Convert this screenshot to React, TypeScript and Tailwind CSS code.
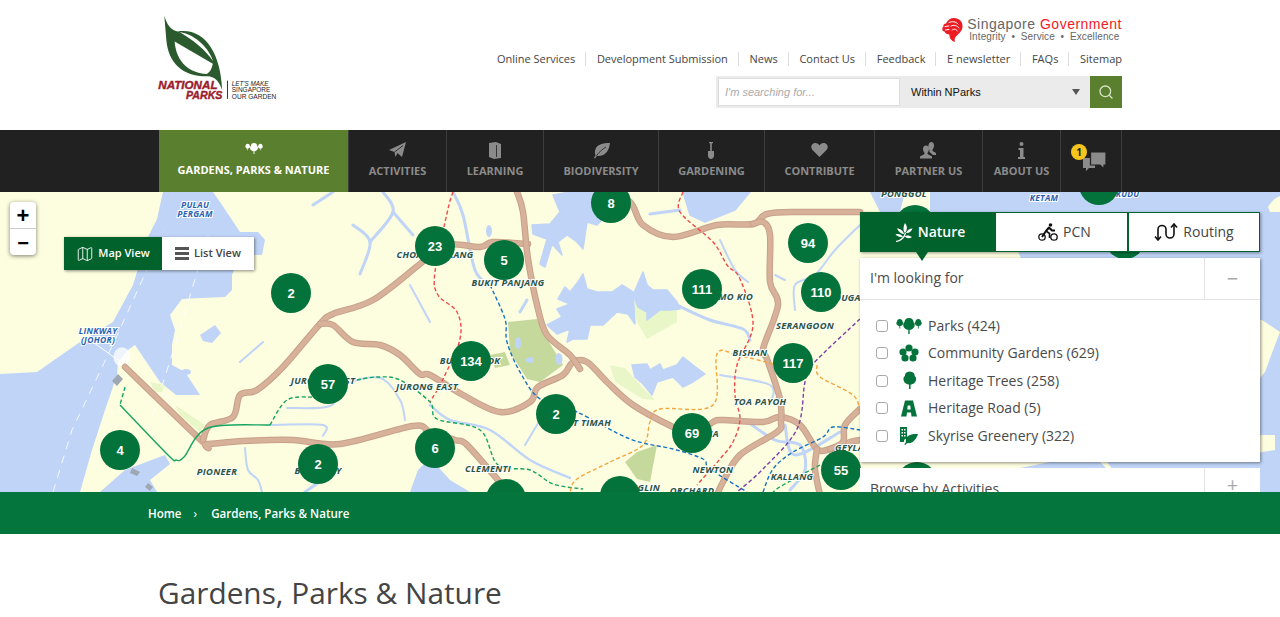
import { Map as MapIcon, Search } from "lucide-react";

type Pt = [number, number];

// catmull-rom through page coordinates, so roads don't look like polylines
function smooth(points: Pt[]) {
  let d = `M${points[0][0]} ${points[0][1]}`;
  for (let i = 0; i < points.length - 1; i++) {
    const p0 = points[i - 1] || points[i];
    const p1 = points[i];
    const p2 = points[i + 1];
    const p3 = points[i + 2] || p2;
    const c1x = p1[0] + (p2[0] - p0[0]) / 6;
    const c1y = p1[1] + (p2[1] - p0[1]) / 6;
    const c2x = p2[0] - (p3[0] - p1[0]) / 6;
    const c2y = p2[1] - (p3[1] - p1[1]) / 6;
    d += ` C${c1x.toFixed(1)} ${c1y.toFixed(1)} ${c2x.toFixed(1)} ${c2y.toFixed(1)} ${p2[0]} ${p2[1]}`;
  }
  return d;
}

const roads: Pt[][] = [
  [[125, 367], [203, 442], [207, 444], [243, 441], [293, 440], [340, 444], [413, 426], [430, 432], [455, 440], [467, 445], [497, 479], [510, 495]],
  [[203, 440], [210, 425], [233, 417], [240, 395], [257, 390], [283, 367], [320, 324], [333, 314], [373, 300], [420, 264], [445, 245], [480, 247], [493, 242], [528, 244]],
  [[320, 324], [333, 325], [353, 342], [380, 345], [400, 355], [420, 374], [430, 375], [463, 395], [500, 412], [530, 402], [538, 387], [563, 375], [573, 362], [587, 362], [607, 382], [633, 405], [673, 427], [695, 435], [713, 422], [723, 420], [763, 422], [780, 417], [800, 425], [817, 449], [830, 449], [850, 442], [860, 440]],
  [[517, 192], [523, 212], [528, 259], [538, 309], [547, 335], [570, 355], [580, 369]],
  [[605, 192], [630, 202], [643, 225], [673, 237], [717, 225], [753, 224], [767, 214], [800, 212], [860, 212]],
  [[753, 224], [763, 222], [770, 235], [770, 282], [778, 305], [763, 349], [767, 359], [780, 399], [781, 422], [777, 432], [740, 455], [723, 482], [717, 495]],
  [[817, 449], [815, 469], [820, 495]],
  [[830, 449], [843, 442], [845, 425], [860, 409]],
];

const metro: { color: string; pts: Pt[]; dash?: string }[] = [
  { color: "#ee4b4b", pts: [[453, 192], [448, 209], [435, 272], [438, 295], [457, 312], [460, 339], [443, 379], [430, 402]] },
  { color: "#ee4b4b", pts: [[683, 192], [680, 212], [713, 242], [727, 265], [740, 279], [753, 325], [737, 365], [735, 395], [740, 419], [733, 442], [720, 459], [697, 485]] },
  { color: "#16a560", pts: [[125, 387], [120, 405]] },
  { color: "#16a560", pts: [[120, 405], [168, 455], [176, 460], [184, 457], [208, 428], [270, 425]], dash: "none" },
  { color: "#16a560", pts: [[270, 425], [287, 400], [313, 397]] },
  { color: "#16a560", pts: [[357, 380], [377, 377], [400, 380], [430, 402], [437, 419], [480, 430], [498, 465], [530, 470], [553, 484], [583, 489]] },
  { color: "#1673c5", pts: [[490, 285], [505, 319], [507, 342], [520, 372], [540, 399], [577, 412], [630, 439], [673, 449], [703, 459], [710, 469], [747, 492]] },
  { color: "#1673c5", pts: [[763, 492], [773, 469], [793, 452], [823, 437], [833, 427], [860, 430]] },
  { color: "#f4a53c", pts: [[773, 364], [737, 355], [717, 354], [713, 405], [660, 409], [650, 422], [643, 445], [610, 462], [577, 479], [570, 492]] },
  { color: "#f4a53c", pts: [[817, 365], [820, 377], [853, 395], [860, 412]] },
  { color: "#7b3fa8", pts: [[860, 319], [813, 364], [805, 382], [797, 429], [763, 469], [737, 492]] },
  { color: "#16a560", pts: [[820, 465], [783, 485], [773, 492]] },
];

// the reservoirs have jagged edges, so they are plain polygons
const reservoirs = [
  "532,225 550,224 560,212 553,195 570,192 593,192 607,215 597,225 587,222 583,249 577,242 567,235 558,242 562,255 552,244 545,267 540,264 547,239 533,234",
  "558,299 565,287 570,292 578,282 583,274 587,289 597,292 612,292 622,285 633,292 635,324 628,314 617,312 603,325 590,325 587,339 573,339 567,342 570,329 557,334 547,325 562,317 557,309 570,304",
  "633,295 643,272 647,285 653,290 667,290 677,302 680,309 670,310 660,310 647,320 647,312 638,307",
  "632,365 647,364 650,370 660,364 663,370 677,365 683,357 693,365 705,374 693,382 683,387 673,377 657,382 652,395 643,384 635,377",
  "683,192 750,192 735,210 705,222 690,215",
];

const rivers: { w: number; pts: Pt[] }[] = [
  { w: 3, pts: [[677, 305], [710, 320], [743, 329], [750, 340]] },
  { w: 3, pts: [[650, 214], [680, 210]] },
  { w: 3, pts: [[453, 192], [463, 215], [475, 270], [490, 285]] },
  { w: 3, pts: [[353, 225], [370, 242], [360, 274]] },
  { w: 3, pts: [[370, 242], [393, 212], [383, 192]] },
  { w: 3, pts: [[393, 212], [413, 235]] },
  { w: 3, pts: [[313, 205], [333, 192]] },
  { w: 2, pts: [[410, 285], [430, 322]] },
  { w: 2, pts: [[240, 362], [263, 342]] },
  { w: 2, pts: [[287, 408], [330, 406], [345, 385], [380, 378], [400, 400], [405, 420]] },
  { w: 2, pts: [[270, 425], [323, 425], [323, 436]] },
  { w: 2, pts: [[245, 448], [248, 470], [258, 480], [262, 492]] },
  { w: 3, pts: [[322, 480], [305, 492]] },
  { w: 2.5, pts: [[430, 405], [450, 420], [490, 430], [530, 460], [570, 478]] },
  { w: 2, pts: [[540, 420], [525, 445]] },
  { w: 3, pts: [[520, 312], [527, 300]] },
  { w: 2, pts: [[720, 375], [770, 385], [770, 405]] },
  { w: 3, pts: [[745, 420], [775, 440], [800, 445], [805, 470], [790, 490]] },
  { w: 3, pts: [[785, 425], [795, 455], [840, 432]] },
  { w: 2, pts: [[720, 240], [735, 270], [748, 282]] },
  { w: 2, pts: [[775, 275], [785, 280]] },
  { w: 2, pts: [[795, 310], [795, 285], [815, 275], [835, 250], [860, 225]] },
];

const clusters: { x: number; y: number; n?: string }[] = [
  { x: 611, y: 203, n: "8" },
  { x: 435, y: 246, n: "23" },
  { x: 504, y: 260, n: "5" },
  { x: 291, y: 293, n: "2" },
  { x: 328, y: 384, n: "57" },
  { x: 471, y: 361, n: "134" },
  { x: 556, y: 414, n: "2" },
  { x: 120, y: 450, n: "4" },
  { x: 318, y: 464, n: "2" },
  { x: 435, y: 448, n: "6" },
  { x: 692, y: 433, n: "69" },
  { x: 841, y: 470, n: "55" },
  { x: 702, y: 289, n: "111" },
  { x: 821, y: 292, n: "110" },
  { x: 808, y: 243, n: "94" },
  { x: 793, y: 363, n: "117" },
  { x: 506, y: 499 },
  { x: 620, y: 496 },
  { x: 915, y: 225 },
  { x: 1099, y: 185 },
  { x: 1125, y: 239 },
  { x: 917, y: 482 },
];

const labels: { x: number; y: number; t: string; a?: "start" | "middle" | "end" }[] = [
  { x: 435, y: 258, t: "CHOA CHU KANG" },
  { x: 508, y: 286, t: "BUKIT PANJANG" },
  { x: 753, y: 300, t: "ANG MO KIO", a: "end" },
  { x: 805, y: 329, t: "SERANGOON" },
  { x: 851, y: 301, t: "HOUGANG" },
  { x: 750, y: 356, t: "BISHAN" },
  { x: 760, y: 405, t: "TOA PAYOH" },
  { x: 470, y: 364, t: "BUKIT BATOK" },
  { x: 427, y: 390, t: "JURONG EAST" },
  { x: 323, y: 384, t: "JURONG WEST" },
  { x: 217, y: 475, t: "PIONEER" },
  { x: 318, y: 474, t: "BOON LAY" },
  { x: 611, y: 426, t: "BUKIT TIMAH", a: "end" },
  { x: 719, y: 437, t: "NOVENA", a: "end" },
  { x: 713, y: 473, t: "NEWTON" },
  { x: 692, y: 494, t: "ORCHARD" },
  { x: 792, y: 480, t: "KALLANG" },
  { x: 835, y: 451, t: "GEYLANG", a: "start" },
  { x: 488, y: 472, t: "CLEMENTI" },
  { x: 660, y: 491, t: "TANGLIN", a: "end" },
  { x: 904, y: 197, t: "PONGGOL" },
];

function MapCanvas() {
  return (
    <svg viewBox="0 192 1280 300" className="block h-[300px] w-[1280px]">
      <rect x="0" y="192" width="1280" height="300" fill="#fdfde0" />
      {/* strait and north-east coast */}
      <path
        fill="#bfd4f7"
        d="M163 192L157 219 147 239 133 285 113 322 80 342 37 372 0 374 0 492 80 492 92 450 105 410 117 375 118 362 128 350 135 345 160 382 176 395 200 395 185 372 172 365 172 345 175 330 170 315 182 299 200 298 225 297 232 290 232 275 240 255 262 255 265 240 258 232 240 232 222 205 213 192Z"
      />
      <path fill="#bfd4f7" d="M930 192H1280V492H1130L1090 440 1040 300 1000 212 930 212Z" />
      <path fill="#bfd4f7" d="M870 192H905L900 212H880Z" />
      <path fill="#fdfde0" d="M1262 320L1280 332 1275 345 1265 372 1260 378 1220 378 1220 320Z" />
      <path fill="#fdfde0" d="M1200 435H1275V450L1200 462Z" />
      <path fill="#fdfde0" d="M1268 207C1272 200 1276 198 1280 196V212H1270Z" />
      <path fill="#fdfde0" d="M860 462H1100V470L1010 492H860Z" />
      <path fill="#bfd4f7" d="M1010 470L1050 462 1100 462 1130 492 1000 492Z" />
      {/* port and bay shapes */}
      <path fill="#bfd4f7" d="M125 470L165 455 170 464 150 480 157 492 100 492Z" />
      <path fill="#bfd4f7" d="M410 492L418 470 430 458 450 480 470 492Z" />
      <path fill="#bfd4f7" d="M200 335L215 325 221 333 212 343 203 341Z" />
      <path fill="#fff" d="M128 350a8 9 0 1 0-12 14a8 9 0 0 0 12-14Z" opacity=".75" />
      {/* parks */}
      <path fill="#e9f7c8" d="M633 302L677 309 677 322 647 339 637 322Z" />
      <path fill="#e9f7c8" d="M610 365L625 368 640 385 655 400 643 399 615 382Z" />
      <path fill="#c6d99c" d="M508 322L537 319 543 332 563 365 540 382 527 379 510 352Z" />
      <path fill="#c6d99c" d="M637 452L657 445 650 482 637 479 625 462Z" />
      <path fill="#c6d99c" d="M490 355L505 352 510 365 495 368Z" />
      <path fill="#e9f7c8" d="M150 382L165 385 162 392 155 392Z" />
      <path fill="#e9f7c8" d="M175 405L205 425 200 432 180 415Z" />
      {reservoirs.map((points) => (
        <polygon key={points} points={points} fill="#bfd4f7" stroke="#bfd4f7" strokeWidth="1.5" strokeLinejoin="round" />
      ))}
      {rivers.map((a, i) => (
        <path key={i} d={smooth(a.pts)} fill="none" stroke="#bfd4f7" strokeWidth={a.w} strokeLinecap="round" />
      ))}
      <ellipse cx="518" cy="343" rx="3" ry="6" fill="#bfd4f7" />
      <ellipse cx="530" cy="360" rx="4" ry="3" fill="#bfd4f7" />
      <ellipse cx="559" cy="359" rx="3.5" ry="6" fill="#bfd4f7" />
      <ellipse cx="489" cy="231" rx="3" ry="6" fill="#bfd4f7" />
      <ellipse cx="186" cy="372" rx="5" ry="3" fill="#bfd4f7" />
      {/* causeway and shipping lanes */}
      <path d="M148 430L175 345 210 230" stroke="#fff" strokeWidth="1" strokeDasharray="8 7" fill="none" opacity=".85" />
      <path d="M53 492L72 430 115 340 165 230" stroke="#fff" strokeWidth="1" strokeDasharray="8 7" fill="none" opacity=".85" />
      <path d="M90 340L118 360" stroke="#fff" strokeWidth="1" fill="none" />
      <path d="M112 381l6-7 5 5-6 7Z" fill="#9ea8b3" />
      <path d="M132 468l8 4-3 4-7-3Z" fill="#9ea8b3" />
      <path d="M148 483l5 4-3 4-5-4Z" fill="#9ea8b3" />
      {roads.map((r, i) => (
        <g key={i} fill="none" strokeLinecap="round" strokeLinejoin="round">
          <path d={smooth(r)} stroke="#c7a189" strokeWidth="6.5" />
          <path d={smooth(r)} stroke="#d7b19a" strokeWidth="4.5" />
        </g>
      ))}
      {metro.map((m, i) => (
        <path
          key={i}
          d={smooth(m.pts)}
          fill="none"
          stroke={m.color}
          strokeWidth="1.4"
          strokeDasharray={m.dash === "none" ? undefined : "4 2.5"}
        />
      ))}
      <g
        fontFamily="'Open Sans', sans-serif"
        fontSize="9.3"
        fontWeight="700"
        fontStyle="italic"
        fill="#2a5444"
        stroke="#fff"
        strokeWidth="2"
        letterSpacing=".3"
        textAnchor="middle"
        style={{ paintOrder: "stroke" }}
      >
        {labels.map((l) => (
          <text key={l.t} x={l.x} y={l.y} textAnchor={l.a || "middle"}>
            {l.t}
          </text>
        ))}
        <g fill="#2a5fb0" fontSize="8.5">
          <text x="195" y="208">PULAU</text>
          <text x="195" y="217">PERGAM</text>
          <text x="98" y="334">LINKWAY</text>
          <text x="98" y="343">(JOHOR)</text>
          <text x="1120" y="197">SERKUDU</text>
          <text x="1044" y="201">KETAM</text>
        </g>
      </g>
      {clusters.map((c) => (
        <g key={`${c.x}-${c.y}`}>
          <circle cx={c.x} cy={c.y} r="20" fill="#04733b" />
          {c.n && (
            <text
              x={c.x}
              y={c.y + 4.5}
              textAnchor="middle"
              fontFamily="'Liberation Sans', sans-serif"
              fontWeight="700"
              fontSize="13"
              fill="#fff"
            >
              {c.n}
            </text>
          )}
        </g>
      ))}
    </svg>
  );
}

function NParksLogo() {
  return (
    <svg viewBox="50 40 370 270" className="-ml-px h-[90px] w-[123px]">
      <path
        fill="#2b5a2f"
        d="M72 48C80 75 92 92 112 95C190 82 242 155 246 272C238 247 226 234 207 230C130 233 84 192 78 120Z"
      />
      <path fill="#fff" d="M103 125L218 192C215 205 210 218 199 223C150 220 108 190 103 125Z" />
      <path fill="#fff" d="M118 97C160 122 195 150 219 185C207 148 170 106 118 97Z" />
      <g
        fontFamily="'Liberation Sans', sans-serif"
        fontWeight="700"
        fontStyle="italic"
        fill="#9c1b2e"
        stroke="#9c1b2e"
        strokeWidth="1.2"
        fontSize="34"
      >
        <text x="54" y="268" textLength="178" lengthAdjust="spacingAndGlyphs">NATIONAL</text>
        <text x="137" y="297" textLength="110" lengthAdjust="spacingAndGlyphs">PARKS</text>
      </g>
      <path d="M262 243V298" stroke="#333" strokeWidth="3" />
      <g fontFamily="'Liberation Sans', sans-serif" fill="#222" fontSize="21">
        <text x="275" y="259" textLength="110" lengthAdjust="spacingAndGlyphs" fontStyle="italic">LET'S MAKE</text>
        <text x="275" y="278" textLength="116" lengthAdjust="spacingAndGlyphs">SINGAPORE</text>
        <text x="275" y="297" textLength="134" lengthAdjust="spacingAndGlyphs">OUR GARDEN</text>
      </g>
    </svg>
  );
}

function Lion() {
  return (
    <svg viewBox="0 0 21 24" className="h-6 w-[21px]">
      <path
        fill="#ec1c24"
        d="M12 0C17 0 21 3.5 20.5 9C20 14 16 16 13.5 19C12.5 20.5 12.5 22.5 13 24C9.5 23 7 20 7.5 16.5C5.5 16.5 3 15.5 2.5 13.5C1 13.5 0 12.5 0.5 11C0 10 0.5 9 1.5 8.5C1 7 2 5.5 4 5.5C5.5 2 8.5 0 12 0Z"
      />
      <g fill="none" stroke="#fff" strokeWidth="1" strokeLinecap="round">
        <path d="M7 4.5C10 3 14 3.5 16 6" />
        <path d="M9 8C12 6.5 15 7.5 17 10" />
        <path d="M10 12C12 10.5 14 11 15.5 13" />
        <path d="M3 8.5L7 8" />
        <path d="M3.5 12L7 11.5" />
      </g>
    </svg>
  );
}

function TreeShape({ x = 0, y = 0, s = 1, fill = "currentColor" }: { x?: number; y?: number; s?: number; fill?: string }) {
  return (
    <path
      transform={`translate(${x} ${y}) scale(${s})`}
      fill={fill}
      d="M8 0C11 0 12.5 2 12.5 4C14.5 5.5 14 9 12 10.5C11 11.5 9.5 12 8.7 11.8V16H7.3V11.8C6.5 12 5 11.5 4 10.5C2 9 1.5 5.5 3.5 4C3.5 2 5 0 8 0Z"
    />
  );
}

function ParksIcon({ className }: { className?: string }) {
  return (
    <svg viewBox="0 0 26 16" className={className}>
      <TreeShape x={-1} y={1} s={0.6} />
      <TreeShape x={5} y={0} s={1} />
      <TreeShape x={17.5} y={1} s={0.6} />
    </svg>
  );
}

function FlowerIcon() {
  return (
    <svg viewBox="0 0 20 18" className="h-[18px] w-5">
      <g fill="#04733b">
        <circle cx="10" cy="4" r="3.6" />
        <circle cx="4" cy="8" r="3.6" />
        <circle cx="16" cy="8" r="3.6" />
        <circle cx="6" cy="14" r="3.6" />
        <circle cx="14" cy="14" r="3.6" />
      </g>
      <circle cx="10" cy="9.5" r="1.8" fill="#fff" />
    </svg>
  );
}

function RoadIcon() {
  return (
    <svg viewBox="0 0 16 16" className="h-[17px] w-[16px]">
      <path
        fill="#04733b"
        fillRule="evenodd"
        d="M4 0H12L16 16H10.5L10 12H6L5.5 16H0ZM6.7 5L6.3 9H9.7L9.3 5Z"
      />
    </svg>
  );
}

function SkyriseIcon() {
  return (
    <svg viewBox="0 0 18 18" className="h-[18px] w-[18px]">
      <path fill="#04733b" d="M0 0H7V12H5C4 13 4 14 4 15H0Z" />
      <g fill="#fff">
        <rect x="1.5" y="2" width="1.5" height="1.5" />
        <rect x="4" y="2" width="1.5" height="1.5" />
        <rect x="1.5" y="5" width="1.5" height="1.5" />
        <rect x="4" y="5" width="1.5" height="1.5" />
        <rect x="1.5" y="8" width="1.5" height="1.5" />
        <rect x="4" y="8" width="1.5" height="1.5" />
      </g>
      <path fill="#04733b" d="M18 7C12 6.5 7 8 6 12C5.5 14 6 15 6 15C5 16 4.5 17 4.5 18L5.5 18C6 17 6.5 16.5 7.5 16C12 17 16 13 18 7Z" />
    </svg>
  );
}

function SprigIcon() {
  return (
    <svg viewBox="0 0 18 20" className="h-5 w-[18px]" fill="#fff">
      <path d="M1 19.5C6 19 9 16 10.5 11" stroke="#fff" strokeWidth="1.2" fill="none" />
      <path d="M10 11C8 9 8 5 10 1C12.5 4 12.5 8 10 11Z" />
      <path d="M9 12C6.5 12 3.5 10 2 6.5C5.5 6.5 8.5 9 9 12Z" />
      <path d="M11 11C12 8.5 14.5 6.5 17.5 6.5C16.5 9.5 14 11.5 11 11Z" />
      <path d="M8 15C6 15.5 3 15 0.5 12.5C3.5 11.5 6.5 12.5 8 15Z" />
      <path d="M9.5 14C12 13 15 13.5 17 15C14.5 17 11.5 16.5 9.5 14Z" />
    </svg>
  );
}

function BikeIcon() {
  return (
    <svg viewBox="0 0 20 18" className="h-[18px] w-5">
      <circle cx="4" cy="14" r="3.2" fill="none" stroke="#111" strokeWidth="1.3" />
      <circle cx="16" cy="14" r="3.2" fill="none" stroke="#111" strokeWidth="1.3" />
      <circle cx="12.5" cy="2" r="1.8" fill="#111" />
      <path d="M4 14L8 8L11 4.5L14 7.5H17" fill="none" stroke="#111" strokeWidth="2" strokeLinejoin="round" />
      <path d="M8 8L11.5 10.5V15" fill="none" stroke="#111" strokeWidth="1.6" />
    </svg>
  );
}

function RoutingIcon() {
  return (
    <svg viewBox="0 0 24 18" className="h-[18px] w-6" fill="none" stroke="#111" strokeWidth="1.6">
      <path d="M4 16V6.5a4 4 0 0 1 8 0V11a4 4 0 0 0 8 0V2" />
      <path d="M1 13.5L4 17L7 13.5" />
      <path d="M17 4.5L20 1L23 4.5" />
    </svg>
  );
}

const navIcons = {
  plane: (
    <>
      <path d="M0 8L17 0L13 15L8.5 11L6.5 15L5.5 10Z" />
      <path d="M5.5 10L14 3.5" stroke="#212121" strokeWidth=".8" fill="none" />
    </>
  ),
  book: (
    <>
      <path d="M2 1L9 0L14 2V16L7 17L2 15Z" />
      <path d="M9.5 3V15" stroke="#212121" strokeWidth=".8" fill="none" />
    </>
  ),
  leaf: (
    <>
      <path d="M17 1C10 1 3 2 2 9C1.7 11 2 12 2.5 13L1 16L2 16.5L4 14C11 14.5 16 10 17 1Z" />
      <path d="M3 14.5C6 10 9 7.5 13 5" stroke="#212121" strokeWidth=".8" fill="none" />
    </>
  ),
  shovel: <path d="M6 0H10V1.2H8.8V9H11V14C11 15.5 9.5 17 8 17C6.5 17 5 15.5 5 14V9H7.2V1.2H6Z" />,
  heart: <path d="M8.5 15L1.5 8C-0.5 6 0 2.5 2.5 1.5C5 0.5 7.5 1.5 8.5 3.5C9.5 1.5 12 0.5 14.5 1.5C17 2.5 17.5 6 15.5 8Z" />,
  people: (
    <>
      <path d="M11 0C13 0 14 1.5 14 3.5C14 5.5 13 7 12.5 7.5V9L16 11V13H13L9.5 10V8C8.5 6.5 8 5 8.5 3C9 1 10 0 11 0Z" />
      <path d="M6 3.5C8 3.5 9 5 9 7C9 9 8 10 7.5 11V12L12 14.5V16.5H0V14.5L4.5 12V11C4 10 3 9 3 7C3 5 4 3.5 6 3.5Z" />
    </>
  ),
  info: (
    <>
      <circle cx="8.5" cy="2" r="2" />
      <path d="M5.5 6H10.5V15H12V17H5V15H7V8H5.5Z" />
    </>
  ),
};

const navItems = [
  { label: "ACTIVITIES", w: "w-[98px]", icon: navIcons.plane },
  { label: "LEARNING", w: "w-[97px]", icon: navIcons.book },
  { label: "BIODIVERSITY", w: "w-[115px]", icon: navIcons.leaf },
  { label: "GARDENING", w: "w-[106px]", icon: navIcons.shovel },
  { label: "CONTRIBUTE", w: "w-[110px]", icon: navIcons.heart },
  { label: "PARTNER US", w: "w-[108px]", icon: navIcons.people },
  { label: "ABOUT US", w: "w-[78px]", icon: navIcons.info },
];

const topLinks = ["Online Services", "Development Submission", "News", "Contact Us", "Feedback", "E newsletter", "FAQs"];

const filters = [
  { label: "Parks (424)", icon: <ParksIcon className="h-4 w-[26px] text-[#04733b]" /> },
  { label: "Community Gardens (629)", icon: <FlowerIcon /> },
  { label: "Heritage Trees (258)", icon: <svg viewBox="0 0 16 18" className="h-[19px] w-4 text-[#04733b]"><TreeShape s={1.1} /></svg> },
  { label: "Heritage Road (5)", icon: <RoadIcon /> },
  { label: "Skyrise Greenery (322)", icon: <SkyriseIcon /> },
];

export default function App() {
  return (
    <div className="h-screen overflow-hidden bg-white font-['Open_Sans',sans-serif] text-[#333]">
      <header className="h-[130px] bg-white">
        <div className="mx-auto flex h-full w-[964px] justify-between">
          <div className="pt-[13px]">
            <NParksLogo />
          </div>
          <div className="flex flex-col items-end pt-[17px]">
            <div className="flex items-center gap-1">
              <Lion />
              <div className="font-['Liberation_Sans',sans-serif] leading-none">
                <div className="text-[14px] leading-[14px] tracking-[0.5px] text-[#666]">
                  Singapore <span className="text-[#ee1c25]">Government</span>
                </div>
                <div className="pl-[2px] text-[10px] leading-[11px] tracking-[0.1px] text-[#666]">
                  Integrity &nbsp;•&nbsp; Service &nbsp;•&nbsp; Excellence
                </div>
              </div>
            </div>
            <nav className="mt-[10px] flex items-center text-[11px] leading-[14px] text-[#444]">
              {topLinks.map((link) => (
                <a key={link} className="mr-[10.7px] border-r border-[#ddd] pr-[10px]">
                  {link}
                </a>
              ))}
              <a>Sitemap</a>
            </nav>
            <div className="mt-[10px] flex h-8 w-[406px] bg-[#ebebeb]">
              <div className="my-0.5 ml-0.5 flex w-[182px] items-center border border-[#ddd] bg-white pl-[6px] font-['Liberation_Sans',sans-serif] text-[11px] italic text-[#aaa]">
                I'm searching for...
              </div>
              <div className="flex flex-1 items-center justify-between pl-[11px] pr-[10px] font-['Liberation_Sans',sans-serif] text-[11px] text-[#111]">
                Within NParks
                <span className="h-0 w-0 border-x-[4px] border-t-[6px] border-x-transparent border-t-[#555]" />
              </div>
              <button className="flex w-8 items-center justify-center bg-[#5a7f2e] text-[#d8e4c8]">
                <Search size={16} strokeWidth={2} />
              </button>
            </div>
          </div>
        </div>
      </header>

      <div className="h-[62px] bg-[#212121]">
        <nav className="mx-auto flex h-full w-[964px] pl-px">
          <a className="flex h-full w-[190px] flex-col items-center border-r border-[#3d3d3d] bg-[#5a7f2e] pt-[13px] text-white">
            <ParksIcon className="h-[11px] w-[18px]" />
            <span className="mt-[8px] text-[11px] font-bold leading-[15px]">GARDENS, PARKS &amp; NATURE</span>
          </a>
          {navItems.map((item) => (
            <a key={item.label} className={`flex h-full flex-col items-center border-r border-[#3d3d3d] pt-[12px] text-[#8b8b8b] ${item.w}`}>
              <svg viewBox="0 0 17 17" className="h-[17px] w-[17px]" fill="currentColor" fillRule="evenodd">
                {item.icon}
              </svg>
              <span className="mt-[4px] text-[11px] font-bold leading-[15px]">{item.label}</span>
            </a>
          ))}
          <a className="relative h-full w-[61px] border-r border-[#3d3d3d]">
            <svg viewBox="0 0 24 20" className="absolute left-[22px] top-[21px] h-5 w-6">
              <path fill="#8b8b8b" d="M0 7H12V17H6L3 20V17H0Z" />
              <path fill="#8b8b8b" stroke="#212121" strokeWidth="1.2" d="M7.5 1H23V14H21V18L17 14H7.5Z" />
            </svg>
            <span className="absolute left-[10px] top-[14px] flex h-4 w-4 items-center justify-center rounded-full bg-[#f6c51d] text-[10px] font-bold text-[#222]">
              1
            </span>
          </a>
        </nav>
      </div>

      <section className="relative h-[300px] overflow-hidden">
        <MapCanvas />

        <div className="absolute left-[10px] top-[10px] flex w-[26px] flex-col rounded bg-white text-black shadow-[0_1px_4px_rgba(0,0,0,0.5)]">
          <button className="flex h-[27px] items-center justify-center border-b border-[#ccc] pt-[2px] font-['Liberation_Sans',sans-serif] text-[22px] font-bold leading-none">+</button>
          <button className="flex h-[26px] items-center justify-center pt-[2px] font-['Liberation_Sans',sans-serif] text-[20px] font-bold leading-none">−</button>
        </div>

        <div className="absolute left-[64px] top-[45px] flex h-[33px] text-[11px] font-semibold shadow-[1px_1px_3px_rgba(0,0,0,0.45)]">
          <div className="flex w-[98px] items-center justify-center gap-1 bg-[#02622c] text-white">
            <MapIcon size={18} strokeWidth={1.2} />
            Map View
          </div>
          <div className="flex w-[92px] items-center justify-center gap-[5px] bg-white text-[#444]">
            <span className="flex h-[13px] w-[14px] flex-col justify-between">
              <span className="h-[3px] bg-[#555]" />
              <span className="h-[3px] bg-[#555]" />
              <span className="h-[3px] bg-[#555]" />
            </span>
            List View
          </div>
        </div>

        <div className="absolute left-[860px] top-5 w-[400px]">
          <div className="relative flex h-10 text-[14px] text-[#444] shadow-[1px_1px_3px_rgba(0,0,0,0.4)]">
            <div className="flex w-[134px] items-center justify-center gap-[5px] bg-[#02622c] pb-[1px] pl-[6px] font-semibold text-white">
              <SprigIcon />
              Nature
            </div>
            <div className="flex w-[133px] items-center justify-center gap-[5px] border-y border-l-2 border-[#02622c] bg-white pb-[1px] pl-[6px]">
              <BikeIcon />
              PCN
            </div>
            <div className="flex w-[133px] items-center justify-center gap-[5px] border border-l-2 border-[#02622c] bg-white pb-[1px]">
              <RoutingIcon />
              Routing
            </div>
            <span className="absolute left-[56px] top-10 h-0 w-0 border-x-[6px] border-t-[9px] border-x-transparent border-t-[#02622c]" />
          </div>

          <div className="mt-[6px] h-[204px] bg-white text-[14px] text-[#4a4a4a] shadow-[1px_1px_3px_rgba(0,0,0,0.45)]">
            <div className="flex h-[42px] border-b border-[#e4e4e4]">
              <div className="flex flex-1 items-center pb-[2px] pl-[10px]">I'm looking for</div>
              <div className="flex w-[56px] items-center justify-center border-l border-[#e4e4e4] text-[20px] leading-none text-[#aaa]">−</div>
            </div>
            <ul className="flex flex-col pl-4 pt-[12px]">
              {filters.map((f) => (
                <li key={f.label} className="flex h-[27.5px] items-center">
                  <input type="checkbox" readOnly className="h-3 w-3 appearance-none rounded-[3px] border border-[#aaa] bg-white" />
                  <span className="ml-2 flex w-[26px] justify-center">{f.icon}</span>
                  <span className="ml-[6px] leading-none">{f.label}</span>
                </li>
              ))}
            </ul>
          </div>

          <div className="mt-[6px] flex h-[42px] bg-white text-[14px] text-[#4a4a4a]">
            <div className="flex-1 pl-[10px] pt-[10px]">Browse by Activities</div>
            <div className="flex w-[56px] justify-center border-l border-[#e4e4e4] pt-[7px] text-[20px] leading-none text-[#aaa]">+</div>
          </div>
        </div>
      </section>

      <div className="h-[42px] bg-[#04753c]">
        <div className="flex h-full items-center pl-[148px] pt-px text-[11.6px] font-semibold text-white">
          Home
          <span className="ml-[12px] mr-[14px] text-[12px] font-normal">›</span>
          Gardens, Parks &amp; Nature
        </div>
      </div>

      <main className="mx-auto w-[964px] pt-[36px]">
        <h1 className="text-[29.8px] font-normal leading-[46px] text-[#444]">Gardens, Parks &amp; Nature</h1>
      </main>
    </div>
  );
}
